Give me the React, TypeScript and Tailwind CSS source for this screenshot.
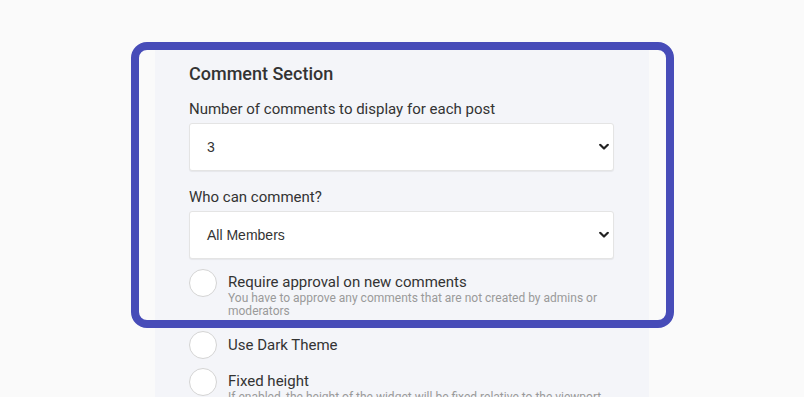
import React from "react";

function Select({ value }: { value: string }) {
  return (
    <div className="relative h-[48px] w-full rounded-[3px] border border-[#e4e4e4] bg-white shadow-[0_1px_1px_rgba(0,0,0,0.06)]">
      <div className="flex h-full items-center pl-[17px] font-['Liberation_Sans',Arial,sans-serif] text-[14px] text-[#333]">
        {value}
      </div>
      <svg
        className="absolute right-[4px] top-1/2 -translate-y-1/2"
        width="10"
        height="7"
        viewBox="0 0 10 7"
      >
        <path d="M1.2 1.3 L5 5 L8.8 1.3" fill="none" stroke="#222" strokeWidth="2.2" strokeLinecap="round" strokeLinejoin="round" />
      </svg>
    </div>
  );
}

function Circle() {
  return <div className="h-[28px] w-[28px] shrink-0 rounded-full border border-[#d4d4d4] bg-white" />;
}

export default function App() {
  return (
    <div className="relative h-[397px] w-[804px] overflow-hidden bg-[#fafafa] font-['Roboto',sans-serif] text-[#333]">
      <div className="ml-[155px] mt-[44px] w-[494px] bg-[#f4f5f9] pl-[34px] pr-[35px] pt-[18px] pb-[40px]">
        <div className="text-[18px] font-medium leading-[24px] text-[#333]">Comment Section</div>
        <div className="mt-[13px] text-[15px] leading-[20px]">Number of comments to display for each post</div>
        <div className="mt-[4px]">
          <Select value="3" />
        </div>
        <div className="mt-[16px] text-[15px] leading-[20px]">Who can comment?</div>
        <div className="mt-[4px]">
          <Select value="All Members" />
        </div>

        <div className="mt-[10px] flex items-start gap-[11px]">
          <Circle />
          <div className="pt-[3px]">
            <div className="text-[15px] leading-[20px]">Require approval on new comments</div>
            <div className="text-[12px] leading-[13px] text-[#9a9a9a]">
              You have to approve any comments that are not created by admins or moderators
            </div>
          </div>
        </div>

        <div className="mt-[13px] flex items-start gap-[11px]">
          <Circle />
          <div className="pt-[4px] text-[15px] leading-[20px]">Use Dark Theme</div>
        </div>

        <div className="mt-[9px] flex items-start gap-[11px]">
          <Circle />
          <div className="pt-[3px]">
            <div className="text-[15px] leading-[20px]">Fixed height</div>
            <div className="text-[12px] leading-[13px] text-[#9a9a9a]">
              If enabled, the height of the widget will be fixed relative to the viewport
            </div>
          </div>
        </div>
      </div>

      <div className="pointer-events-none absolute left-[131px] top-[42px] h-[286px] w-[543px] rounded-[16px] border-[8px] border-[#474cb8]" />
    </div>
  );
}
